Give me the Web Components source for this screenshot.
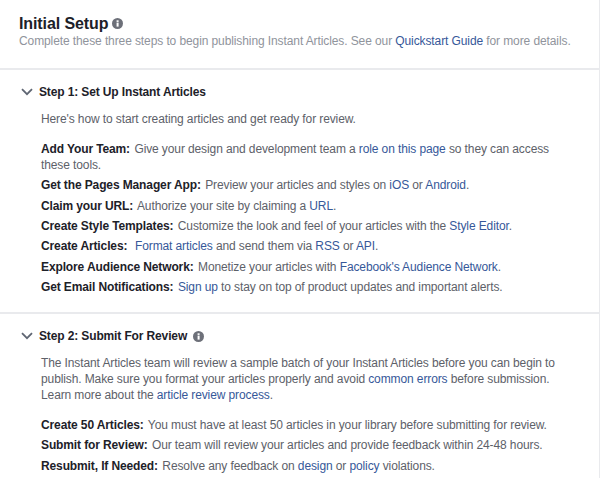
<!DOCTYPE html>
<html>
<head>
<meta charset="utf-8">
<title>Initial Setup</title>
<style>
  html, body { margin: 0; padding: 0; background: #fff; }
  body { font-family: "Liberation Sans", Arial, sans-serif; font-size: 12px; letter-spacing: -0.11px; color: #5d6169; overflow: hidden; height: 478px; }
  a { color: #365899; text-decoration: none; }
  b { color: #1d2129; letter-spacing: -0.12px; margin-right: 1.2px; }
</style>
</head>
<body>

<template id="info-tpl">
  <style>
    :host { display: inline-flex; width: 11px; height: 11px; vertical-align: middle; }
    svg { width: 11px; height: 11px; display: block; }
  </style>
  <svg viewBox="0 0 12 12"><circle cx="6" cy="6" r="6" fill="#6d7079"/><rect x="5" y="5" width="2.2" height="4.4" fill="#fff"/><rect x="5" y="2.5" width="2.2" height="1.8" fill="#fff"/></svg>
</template>

<template id="header-tpl">
  <style>
    :host { display: block; height: 70px; box-sizing: border-box; padding: 14px 19px 0; border-bottom: 2px solid #e9eaed; }
    .title { font-size: 16px; font-weight: bold; letter-spacing: -0.1px; color: #1d2129; line-height: 19px; display: flex; align-items: center; gap: 4px; }
    .sub { font-size: 12px; line-height: 16px; letter-spacing: -0.1px; color: #90949c; white-space: nowrap; }
    ::slotted(a) { color: #365899; text-decoration: none; }
  </style>
  <div class="title"><span><slot name="title"></slot></span><info-icon></info-icon></div>
  <div class="sub"><slot></slot></div>
</template>

<template id="step-tpl">
  <style>
    :host { display: block; padding: 14px 19px 0 21px; box-sizing: border-box; }
    .head { display: flex; align-items: center; height: 16px; font-size: 12px; font-weight: bold; letter-spacing: -0.13px; color: #1d2129; }
    svg.chev { width: 12px; height: 8px; margin-right: 6px; flex: none; }
    .gi { margin-left: 6px; display: inline-flex; }
    .body { padding-left: 20px; }
  </style>
  <div class="head">
    <svg class="chev" viewBox="0 0 12 8"><path d="M1 1.2 L6 6.2 L11 1.2" fill="none" stroke="#5f6673" stroke-width="1.8"/></svg>
    <span><slot name="title"></slot></span><span class="gi"><slot name="icon"></slot></span>
  </div>
  <div class="body"><slot></slot></div>
</template>

<template id="para-tpl">
  <style>
    :host { display: block; line-height: 16px; margin-top: 11px; }
  </style>
  <slot></slot>
</template>

<template id="rows-tpl">
  <style>
    :host { display: flex; flex-direction: column; gap: 4.35px; margin-top: 14px; line-height: 16px; }
  </style>
  <slot></slot>
</template>

<template id="card-tpl">
  <style>
    :host { display: block; height: 478px; box-sizing: border-box; border-right: 1px solid #e9eaed; }
  </style>
  <slot></slot>
</template>

<script>
  function define(name, tpl) {
    customElements.define(name, class extends HTMLElement {
      constructor() {
        super();
        this.attachShadow({mode: 'open'}).appendChild(document.getElementById(tpl).content.cloneNode(true));
      }
    });
  }
  define('info-icon', 'info-tpl');
  define('setup-header', 'header-tpl');
  define('setup-step', 'step-tpl');
  define('step-para', 'para-tpl');
  define('step-rows', 'rows-tpl');
  define('setup-card', 'card-tpl');
</script>

<setup-card>
  <setup-header>
    <span slot="title">Initial Setup</span>
    Complete these three steps to begin publishing Instant Articles. See our <a href="#">Quickstart Guide</a> for more details.
  </setup-header>

  <setup-step style="border-bottom:2px solid #e9eaed;height:244px">
    <span slot="title">Step 1: Set Up Instant Articles</span>
    <step-para>Here's how to start creating articles and get ready for review.</step-para>
    <step-rows>
      <div><b>Add Your Team:</b> Give your design and development team a <a href="#">role on this page</a> so they can access these tools.</div>
      <div><b>Get the Pages Manager App:</b> Preview your articles and styles on <a href="#">iOS</a> or <a href="#">Android</a>.</div>
      <div><b>Claim your URL:</b> Authorize your site by claiming a <a href="#">URL</a>.</div>
      <div><b>Create Style Templates:</b> Customize the look and feel of your articles with the <a href="#">Style Editor</a>.</div>
      <div><b>Create Articles:</b>&nbsp; <a href="#">Format articles</a> and send them via <a href="#">RSS</a> or <a href="#">API</a>.</div>
      <div><b>Explore Audience Network:</b> Monetize your articles with <a href="#">Facebook's Audience Network</a>.</div>
      <div><b>Get Email Notifications:</b> <a href="#">Sign up</a> to stay on top of product updates and important alerts.</div>
    </step-rows>
  </setup-step>

  <setup-step>
    <span slot="title">Step 2: Submit For Review</span>
    <info-icon slot="icon"></info-icon>
    <step-para>The Instant Articles team will review a sample batch of your Instant Articles before you can begin to publish. Make sure you format your articles properly and avoid <a href="#">common errors</a> before submission. Learn more about the <a href="#">article review process</a>.</step-para>
    <step-rows>
      <div><b>Create 50 Articles:</b> You must have at least 50 articles in your library before submitting for review.</div>
      <div><b>Submit for Review:</b> Our team will review your articles and provide feedback within 24-48 hours.</div>
      <div><b>Resubmit, If Needed:</b> Resolve any feedback on <a href="#">design</a> or <a href="#">policy</a> violations.</div>
    </step-rows>
  </setup-step>
</setup-card>
</body>
</html>
